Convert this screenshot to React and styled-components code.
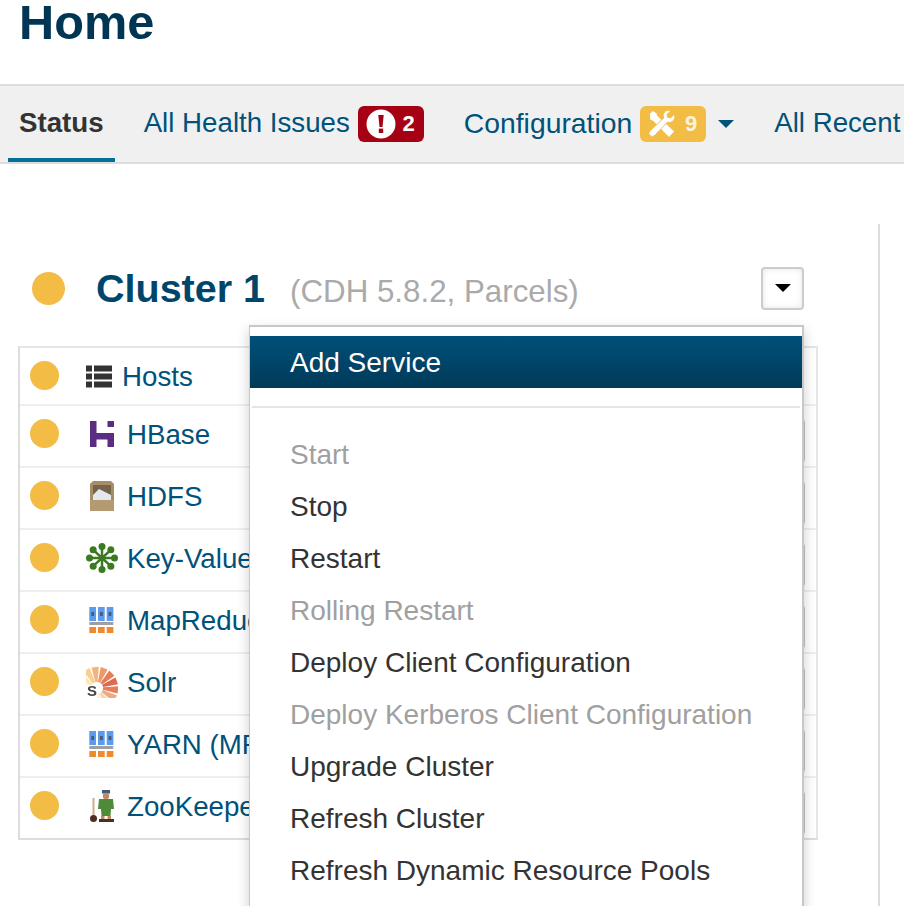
import React from "react";
import styled, { createGlobalStyle } from "styled-components";

const GlobalStyle = createGlobalStyle`
  html, body {
    margin: 0;
    height: 906px;
    overflow: hidden;
    background: #fff;
    font-family: "Liberation Sans", Arial, sans-serif;
  }
`;

const Page = styled.div`
  width: 904px;
  height: 906px;
  overflow: hidden;
`;

const Title = styled.h1`
  margin: 0;
  height: 84px;
  padding-left: 19px;
  box-sizing: border-box;
  font-size: 48.7px;
  line-height: 44px;
  font-weight: 700;
  color: #003553;
`;

const TabBar = styled.nav`
  height: 80px;
  box-sizing: border-box;
  padding-left: 8px;
  display: flex;
  gap: 18px;
  background: #f0f0f0;
  border-top: 2px solid #ddd;
  border-bottom: 2px solid #ddd;
  overflow: hidden;
  white-space: nowrap;
`;

const Tab = styled.a`
  display: flex;
  align-items: center;
  gap: 8px;
  padding: 4px 11px 0;
  font-size: ${(p) => p.$size || 27.7}px;
  color: ${(p) => (p.$active ? "#333" : "#00527a")};
  font-weight: ${(p) => (p.$active ? 700 : 400)};
  border-bottom: 4px solid ${(p) => (p.$active ? "#036f9a" : "transparent")};
`;

const TabLabel = styled.span`
  margin-bottom: 2px;
`;

const Badge = styled.span`
  display: flex;
  align-items: center;
  justify-content: space-between;
  width: 66px;
  height: 36px;
  box-sizing: border-box;
  padding: 0 9px 0 8px;
  border-radius: 6px;
  background: ${(p) => p.$bg};
  color: ${(p) => p.$fg};
  font-size: 22px;
  font-weight: 700;
`;

const TabCaret = styled.span`
  width: 0;
  height: 0;
  margin-left: 4px;
  border-left: 8px solid transparent;
  border-right: 8px solid transparent;
  border-top: 8px solid #00527a;
`;

const Main = styled.main`
  position: relative;
  width: 880px;
  height: 700px;
  margin-top: 60px;
  box-sizing: border-box;
  padding: 43px 0 0 18px;
  border-right: 2px solid #ddd;
`;

const ClusterHead = styled.div`
  display: flex;
  align-items: center;
  height: 43px;
  width: 772px;
  padding-left: 14px;
  margin-bottom: 36px;
`;

const StatusDot = styled.span`
  flex: none;
  display: block;
  width: ${(p) => p.$size}px;
  height: ${(p) => p.$size}px;
  border-radius: 50%;
  background: #f2bc45;
`;

const ClusterName = styled.a`
  margin-left: 31px;
  font-size: 39.5px;
  font-weight: 700;
  color: #00466a;
`;

const ClusterInfo = styled.span`
  margin-left: 25px;
  padding-top: 6px;
  font-size: 31.3px;
  color: #aaa;
`;

const CaretButton = styled.button`
  margin-left: auto;
  width: 43px;
  height: 43px;
  padding: 0 0 2px;
  display: flex;
  align-items: center;
  justify-content: center;
  background: #fff;
  border: 2px solid #ccc;
  border-radius: 4px;
  box-shadow: inset 0 0 6px rgba(0, 0, 0, 0.1);

  &::after {
    content: "";
    border-left: 8px solid transparent;
    border-right: 8px solid transparent;
    border-top: 8px solid #000;
  }
`;

const ServiceList = styled.div`
  width: 800px;
  box-sizing: border-box;
  border: 2px solid #e6e6e6;
  border-left-color: #ddd;
  border-bottom-color: #ddd;
`;

const ServiceRow = styled.div`
  display: flex;
  align-items: flex-start;
  height: 62px;
  box-sizing: border-box;
  padding: 13px 11px 0 10px;
  border-top: 2px solid #eee;

  &:first-child {
    height: 56px;
    border-top: 0;
  }
`;

const IconSlot = styled.span`
  flex: none;
  display: flex;
  align-items: center;
  width: ${(p) => p.$width}px;
  height: 30px;
  margin-left: 27px;

  svg {
    display: block;
    filter: blur(0.6px);
  }
`;

const ServiceName = styled.a`
  font-size: 27.7px;
  line-height: 32px;
  color: #00527a;
  white-space: nowrap;
`;

const RowButton = styled.span`
  margin-left: auto;
  width: 44px;
  height: 44px;
  box-sizing: border-box;
  border: 2px solid #c4c4c4;
  border-radius: 4px;
  background: #eee;
`;

const Menu = styled.ul`
  position: absolute;
  top: 101px;
  left: 249px;
  width: 555px;
  height: 640px;
  margin: 0;
  padding: 9px 0 0;
  box-sizing: border-box;
  list-style: none;
  background: #fff;
  border: 2px solid #c8c8c8;
  border-left-width: 1px;
  box-shadow: 0 5px 12px rgba(0, 0, 0, 0.2);
`;

const MenuItem = styled.li`
  height: 52px;
  padding-left: 40px;
  font-size: 28px;
  line-height: 52px;
  white-space: nowrap;
  color: ${(p) => (p.$disabled ? "#a0a0a0" : "#333")};
`;

const ActiveItem = styled(MenuItem)`
  line-height: 54px;
  color: #fff;
  background: linear-gradient(#00507a, #003a58);
`;

const Divider = styled.li`
  height: 2px;
  margin: 18px 2px 21px;
  background: #e5e5e5;
`;

const AlertIcon = () => (
  <svg width="30" height="30" viewBox="0 0 30 30">
    <circle cx="15" cy="15" r="14.5" fill="#fff" />
    <path d="M12.3 6h5.4l-1.2 12h-3z" fill="#a50014" />
    <rect x="12.8" y="19.6" width="4.4" height="4.4" fill="#a50014" />
  </svg>
);

const ToolsIcon = () => (
  <svg width="28" height="28" viewBox="0 0 30 30" fill="#fff">
    <path d="M2 4l3-3 4 2.500 1 3 18 16.500-5.500 6-17-17.500-3-1z" />
    <path d="M28.500 4.500l-4.500 4-3-.8-.6-3 4-4c-4-1.200-8 1-8 5.500l.4 2.500L2 22.500a3.400 3.400 0 0 0 5 4.800L20.800 13c4.700 1.500 9-2.600 7.700-8.500z" stroke="#f2bc45" strokeWidth="1" />
  </svg>
);

const HostsIcon = () => (
  <svg width="26" height="23" viewBox="0 0 26 23" fill="#333">
    <rect x="0" y="0.500" width="6" height="6" />
    <rect x="8" y="0.500" width="18" height="6" />
    <rect x="0" y="8.500" width="6" height="6" />
    <rect x="8" y="8.500" width="18" height="6" />
    <rect x="0" y="16.500" width="6" height="6" />
    <rect x="8" y="16.500" width="18" height="6" />
  </svg>
);

const HBaseIcon = () => (
  <svg width="32" height="26" viewBox="0 0 32 26" fill="#5a2d82">
    <rect x="4" y="0" width="6.500" height="26" />
    <rect x="4" y="12" width="24" height="6.500" />
    <rect x="21.500" y="12" width="6.500" height="14" />
    <rect x="21.500" y="0" width="6.500" height="6" />
  </svg>
);

const HdfsIcon = () => (
  <svg width="32" height="30" viewBox="0 0 32 30">
    <path d="M7 0h18l3 3v27H4V3z" fill="#a58d66" />
    <rect x="7" y="4" width="18" height="15" fill="#75634a" />
    <path d="M7 14l6-6 12 6v5H7z" fill="#e2e8ee" />
    <rect x="4" y="19" width="24" height="11" fill="#b39a70" />
  </svg>
);

const KEY_VALUE_ANGLES = [-90, -45, 0, 45, 90, 135, 180, 225];

const KeyValueIcon = () => (
  <svg width="32" height="30" viewBox="0 0 32 30" fill="#3c7a22" stroke="#3c7a22">
    <circle cx="16" cy="15" r="3" stroke="none" />
    {KEY_VALUE_ANGLES.map((angle) => {
      const rad = (angle * Math.PI) / 180;
      const x = 16 + 12.500 * Math.cos(rad);
      const y = 15 + 11.500 * Math.sin(rad);
      return (
        <g key={angle}>
          <line x1="16" y1="15" x2={x} y2={y} strokeWidth="2.500" />
          <circle cx={x} cy={y} r="3.500" stroke="none" />
        </g>
      );
    })}
  </svg>
);

const BLOCK_COLUMNS = [3.3, 12, 20.7];

const BlocksIcon = () => (
  <svg width="32" height="26" viewBox="0 0 32 26">
    {BLOCK_COLUMNS.map((x) => (
      <g key={x}>
        <rect x={x} y="0" width="6.700" height="14" fill="#5a9bf0" />
        <rect x={x + 2} y="5" width="2.700" height="4" fill="#4a5a70" />
        <rect x={x} y="20" width="6.700" height="6" fill="#f08a30" />
      </g>
    ))}
    <rect x="3.300" y="15" width="24" height="3" fill="#a0a0a0" />
  </svg>
);

const SOLR_RAYS = [
  { a: -170, c: "#fcf2d0" },
  { a: -145, c: "#fbe6b4" },
  { a: -120, c: "#f8d094" },
  { a: -95, c: "#f4b47c" },
  { a: -70, c: "#ee9a68" },
  { a: -45, c: "#e87c58" },
  { a: -20, c: "#e0684c" },
  { a: 5, c: "#e67e5c" },
  { a: 30, c: "#f0a880" },
  { a: 55, c: "#f8d4ac" },
  { a: 80, c: "#fcf0d8" },
];

const SolrIcon = () => (
  <svg width="32" height="32" viewBox="0 0 32 32">
    <g transform="translate(11 22)">
      {SOLR_RAYS.map((ray) => (
        <path
          key={ray.a}
          d="M6 -1.200L21 -3.600L21 3.600L6 1.200z"
          fill={ray.c}
          transform={`rotate(${ray.a})`}
        />
      ))}
    </g>
    <path d="M0 19h11v13H0z" fill="#fff" />
    <text x="1" y="30" fontFamily="Liberation Sans" fontWeight="700" fontSize="15" fill="#444">
      S
    </text>
  </svg>
);

const KeeperIcon = () => (
  <svg width="32" height="32" viewBox="0 0 32 32">
    <rect x="6.500" y="8" width="2" height="20" fill="#cfae8c" />
    <ellipse cx="7.500" cy="28.500" rx="3.500" ry="3.500" fill="#4a3020" />
    <rect x="16" y="0" width="8" height="3.500" fill="#3e5a78" />
    <circle cx="20" cy="6" r="3.200" fill="#c08a60" />
    <path d="M13 9h14l1 10h-3l-.500 7h-9l-.500-7h-3z" fill="#4f8a3a" />
    <rect x="15" y="26" width="3.500" height="3" fill="#c08a60" />
    <rect x="21.500" y="26" width="3.500" height="3" fill="#c08a60" />
    <rect x="13" y="29" width="15" height="3" fill="#4a3020" />
  </svg>
);

const services = [
  { name: "Hosts", Icon: HostsIcon, slot: 36 },
  { name: "HBase", Icon: HBaseIcon, slot: 41, button: true },
  { name: "HDFS", Icon: HdfsIcon, slot: 41, button: true },
  { name: "Key-Value Store", Icon: KeyValueIcon, slot: 41, button: true },
  { name: "MapReduce", Icon: BlocksIcon, slot: 41, button: true },
  { name: "Solr", Icon: SolrIcon, slot: 41, button: true },
  { name: "YARN (MR2 Included)", Icon: BlocksIcon, slot: 41, button: true },
  { name: "ZooKeeper", Icon: KeeperIcon, slot: 41, button: true },
];

const actions = [
  { label: "Start", disabled: true },
  { label: "Stop" },
  { label: "Restart" },
  { label: "Rolling Restart", disabled: true },
  { label: "Deploy Client Configuration" },
  { label: "Deploy Kerberos Client Configuration", disabled: true },
  { label: "Upgrade Cluster" },
  { label: "Refresh Cluster" },
  { label: "Refresh Dynamic Resource Pools" },
];

export default function App() {
  return (
    <Page>
      <GlobalStyle />
      <Title>Home</Title>

      <TabBar>
        <Tab $active>
          <TabLabel>Status</TabLabel>
        </Tab>
        <Tab>
          <TabLabel>All Health Issues</TabLabel>
          <Badge $bg="#a50014" $fg="#fff">
            <AlertIcon />2
          </Badge>
        </Tab>
        <Tab $size={28.3}>
          <TabLabel>Configuration</TabLabel>
          <Badge $bg="#f2bc45" $fg="#fbf3dc">
            <ToolsIcon />9
          </Badge>
          <TabCaret />
        </Tab>
        <Tab>
          <TabLabel>All Recent Commands</TabLabel>
        </Tab>
      </TabBar>

      <Main>
        <ClusterHead>
          <StatusDot $size={33} />
          <ClusterName>Cluster 1</ClusterName>
          <ClusterInfo>(CDH 5.8.2, Parcels)</ClusterInfo>
          <CaretButton />
        </ClusterHead>

        <ServiceList>
          {services.map(({ name, Icon, slot, button }) => (
            <ServiceRow key={name}>
              <StatusDot $size={29} />
              <IconSlot $width={slot}>
                <Icon />
              </IconSlot>
              <ServiceName>{name}</ServiceName>
              {button && <RowButton />}
            </ServiceRow>
          ))}
        </ServiceList>

        <Menu>
          <ActiveItem>Add Service</ActiveItem>
          <Divider />
          {actions.map((action) => (
            <MenuItem key={action.label} $disabled={action.disabled}>
              {action.label}
            </MenuItem>
          ))}
        </Menu>
      </Main>
    </Page>
  );
}
